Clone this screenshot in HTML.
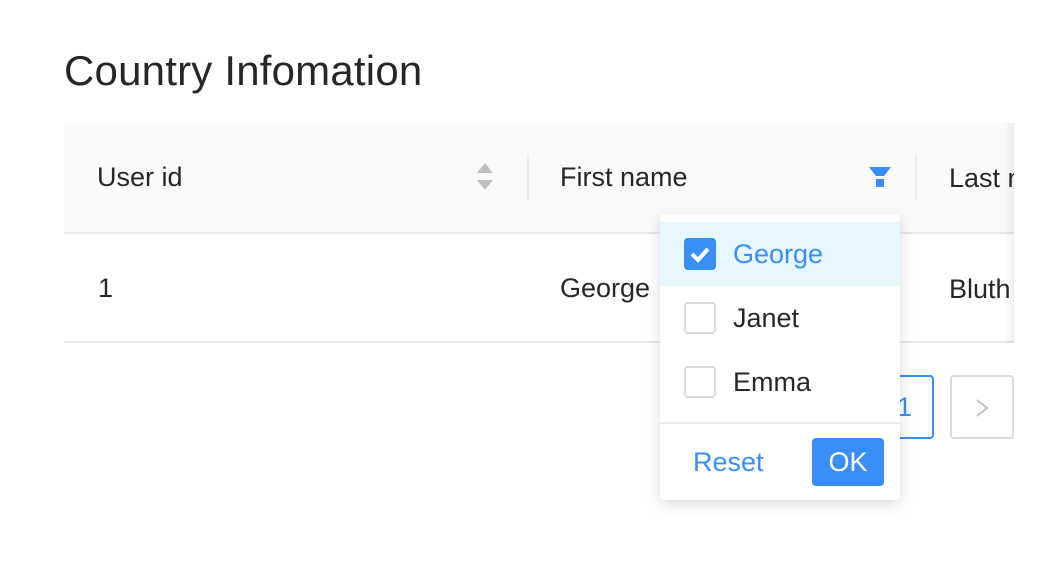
<!DOCTYPE html><html><head><style>
body{margin:0;width:1064px;height:570px;background:#fff;font-family:"Liberation Sans",sans-serif;position:relative;overflow:hidden;color:rgba(0,0,0,.85)}
.a{position:absolute}
</style></head><body>
<div class="a" style="left:64px;top:47px;font-size:42px;letter-spacing:0.2px">Country Infomation</div>
<div class="a" style="left:64px;top:123px;width:950px;height:109px;background:#fafafa;border-bottom:2px solid #e8e8e8"></div>
<div class="a" style="left:64px;top:341px;width:950px;height:2px;background:#e8e8e8"></div>
<div class="a" style="left:97px;top:162px;font-size:27px">User id</div>
<svg class="a" style="left:476px;top:163px" width="18" height="28"><path d="M9 0L17 10H1z" fill="#bfbfbf"/><path d="M9 27L17 17H1z" fill="#bfbfbf"/></svg>
<div class="a" style="left:527px;top:155px;width:2px;height:45px;background:#eee"></div>
<div class="a" style="left:560px;top:162px;font-size:27px">First name</div>
<svg class="a" style="left:869px;top:167px" width="22" height="22"><path d="M0 0H22L15 9H7z" fill="#3a8ef6"/><rect x="7" y="12" width="8" height="8" fill="#3a8ef6"/></svg>
<div class="a" style="left:915px;top:155px;width:2px;height:45px;background:#eee"></div>
<div class="a" style="left:917px;top:123px;width:97px;height:220px;overflow:hidden">
<div class="a" style="left:32px;top:40px;font-size:27px;white-space:nowrap">Last name</div>
<div class="a" style="left:32px;top:151px;font-size:27px">Bluth</div>
</div>
<div class="a" style="left:1004px;top:123px;width:10px;height:220px;background:linear-gradient(90deg,rgba(0,0,0,0),rgba(0,0,0,.06))"></div>
<div class="a" style="left:98px;top:273px;font-size:27px">1</div>
<div class="a" style="left:560px;top:273px;font-size:27px">George</div>
<div class="a" style="left:870px;top:375px;width:64px;height:64px;border:2px solid #3a8ef6;border-radius:4px;box-sizing:border-box"></div>
<div class="a" style="left:897px;top:392px;font-size:27px;color:#3a8ef6">1</div>
<div class="a" style="left:950px;top:375px;width:64px;height:64px;border:2px solid #d9d9d9;border-radius:4px;box-sizing:border-box"></div>
<svg class="a" style="left:975px;top:398px" width="14" height="20"><path d="M2 2L12 10L2 18" stroke="#bfbfbf" stroke-width="2" fill="none"/></svg>
<div class="a" style="left:660px;top:214px;width:240px;height:286px;background:#fff;border-radius:4px;box-shadow:0 4px 14px rgba(0,0,0,.15)">
<div class="a" style="left:0;top:8px;width:240px;height:64px;background:#e6f7ff"></div>
<div class="a" style="left:24px;top:24px;width:32px;height:32px;background:#3a8ef6;border-radius:4px"></div>
<svg class="a" style="left:24px;top:24px" width="32" height="32"><path d="M8 16L14 22L24 11" stroke="#fff" stroke-width="4" fill="none"/></svg>
<div class="a" style="left:73px;top:25px;font-size:27px;color:#3a8ef6">George</div>
<div class="a" style="left:24px;top:88px;width:32px;height:32px;border:2px solid #d9d9d9;border-radius:4px;box-sizing:border-box"></div>
<div class="a" style="left:73px;top:89px;font-size:27px">Janet</div>
<div class="a" style="left:24px;top:152px;width:32px;height:32px;border:2px solid #d9d9d9;border-radius:4px;box-sizing:border-box"></div>
<div class="a" style="left:73px;top:153px;font-size:27px">Emma</div>
<div class="a" style="left:0;top:208px;width:240px;height:2px;background:#e8e8e8"></div>
<div class="a" style="left:33px;top:233px;font-size:27px;color:#3a8ef6">Reset</div>
<div class="a" style="left:152px;top:224px;width:72px;height:48px;background:#3a8ef6;border-radius:4px;color:#fff;font-size:27px;text-align:center;line-height:48px">OK</div>
</div>
</body></html>
